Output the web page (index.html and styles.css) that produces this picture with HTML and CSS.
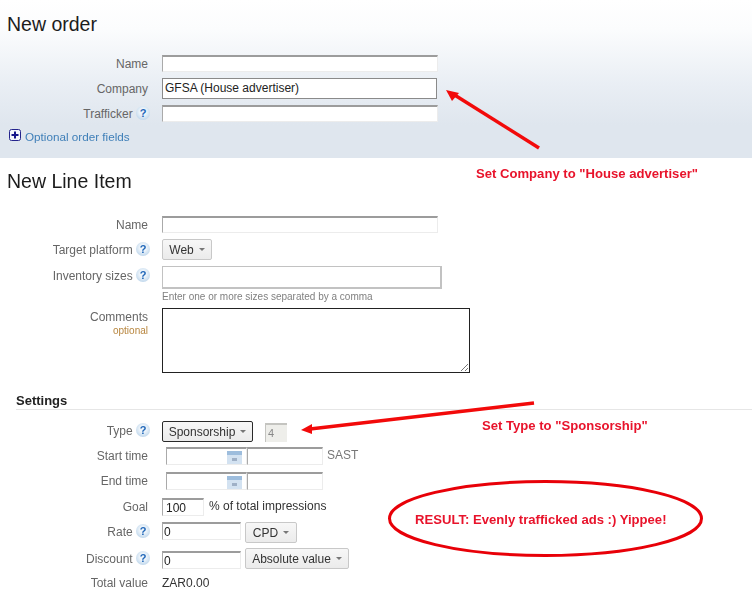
FILE: index.html
```html
<!DOCTYPE html>
<html lang="en">
<head>
<meta charset="utf-8">
<title>New order</title>
<link rel="stylesheet" href="styles.css">
</head>
<body>
<div class="page">
  <section class="panel">
    <h1 class="title">New order</h1>
    <div class="rows">
      <div class="row gap6"><span class="label">Name</span><span class="field w276 h17"></span></div>
      <div class="row gap6"><span class="label">Company</span><span class="field focus w275 h21">GFSA (House advertiser)</span></div>
      <div class="row"><span class="label">Trafficker <i class="help">?</i></span><span class="field w276 h17"></span></div>
    </div>
    <a class="more"><svg class="plus" width="12" height="12" viewBox="0 0 12 12"><rect x="0.5" y="0.5" width="11" height="11" rx="2" fill="#f4f6fb" stroke="#23238c"/><path d="M2.5 6h7M6 2.5v7" stroke="#14148a" stroke-width="2"/></svg>Optional order fields</a>
  </section>

  <section class="line">
    <h2 class="title short">New Line Item</h2>
    <div class="rows top12">
      <div class="row gap6"><span class="label">Name</span><span class="field w276 h17"></span></div>
      <div class="row gap6"><span class="label">Target platform <i class="help">?</i></span><span class="btn w50">Web <b class="caret"></b></span></div>
      <div class="row start"><span class="label pad2">Inventory sizes <i class="help">?</i></span><div><span class="field soft w280 h23"></span><div class="hint">Enter one or more sizes separated by a comma</div></div></div>
      <div class="row start gap6"><span class="label stack"><span>Comments</span><small class="opt">optional</small></span>
        <span class="area"><svg class="grip" width="9" height="9" viewBox="0 0 9 9"><path d="M1 8l7-7M5 8l3-3" stroke="#777" stroke-width="1"/></svg></span></div>
    </div>

    <h3 class="settings">Settings</h3>

    <div class="rows top11">
      <div class="row gap5"><span class="label lift">Type <i class="help">?</i></span><span class="btn dark w91">Sponsorship <b class="caret"></b></span><span class="count">4</span></div>
      <div class="row gap7"><span class="label">Start time</span>
        <span class="dates"><span class="field w81 h18 cal"><svg width="15" height="13" viewBox="0 0 15 13"><rect width="15" height="13" fill="#d3e2f1"/><rect width="15" height="4" fill="#9dbddd"/><rect x="5" y="7" width="5" height="3" fill="#9fb0c6"/></svg></span><span class="field w76 h18"></span></span><span class="after">SAST</span></div>
      <div class="row gap8"><span class="label">End time</span>
        <span class="dates"><span class="field w81 h18 cal"><svg width="15" height="13" viewBox="0 0 15 13"><rect width="15" height="13" fill="#d3e2f1"/><rect width="15" height="4" fill="#9dbddd"/><rect x="5" y="7" width="5" height="3" fill="#9fb0c6"/></svg></span><span class="field w76 h18"></span></span></div>
      <div class="row gap6"><span class="label">Goal</span><span class="field w42 h18">100</span><span class="after strong">% of total impressions</span></div>
      <div class="row gap5 start"><span class="label pad2">Rate <i class="help">?</i></span><span class="field w79 h18 tight">0</span><span class="btn w52 mleft4">CPD <b class="caret"></b></span></div>
      <div class="row gap7 start"><span class="label pad3">Discount <i class="help">?</i></span><span class="field w79 h18 tight drop3">0</span><span class="btn w104 mleft4">Absolute value <b class="caret"></b></span></div>
      <div class="row"><span class="label">Total value</span><span class="value">ZAR0.00</span></div>
    </div>
  </section>

  <svg class="marks" width="752" height="600" viewBox="0 0 752 600">
    <path d="M539 148L453 94" stroke="#f20a0a" stroke-width="3.5" fill="none"/>
    <path d="M446 90L459 93L452 101Z" fill="#f20a0a"/>
    <path d="M534 403L310 429" stroke="#f20a0a" stroke-width="3.5" fill="none"/>
    <path d="M301 430L312 424L312 434Z" fill="#f20a0a"/>
    <ellipse cx="545.5" cy="518.5" rx="156" ry="37" fill="none" stroke="#e80008" stroke-width="3"/>
  </svg>
  <div class="note n1">Set Company to "House advertiser"</div>
  <div class="note n2">Set Type to "Sponsorship"</div>
  <div class="note n3">RESULT: Evenly trafficked ads :) Yippee!</div>
</div>
</body>
</html>
```

FILE: styles.css
```css
* { box-sizing: border-box; }
html, body { margin: 0; padding: 0; background: #fff; }
body { font-family: "Liberation Sans", Arial, sans-serif; font-size: 12px; color: #222; }
.page { position: relative; width: 752px; height: 600px; overflow: hidden; filter: blur(0.3px); }

.panel { height: 158px; background: linear-gradient(#ffffff 0, #fbfcfd 30px, #e9eef4 85px, #dfe6ee 125px, #dfe6ee 158px); }
.title { margin: 0; height: 48px; padding-left: 7px; font-size: 19.5px; line-height: 48px; font-weight: 400; color: #1c1c1c; }
.short { height: 46px; line-height: 46px; }
.rows { padding-top: 7px; }
.top12 { padding-top: 12px; }
.top11 { padding-top: 11px; }

.row { display: flex; align-items: center; }
.start { align-items: flex-start; }
.gap5 { margin-bottom: 5px; }
.gap6 { margin-bottom: 6px; }
.gap7 { margin-bottom: 7px; }
.gap8 { margin-bottom: 8px; }

.label { flex: none; width: 148px; margin-right: 14px; text-align: right; color: #666; line-height: 14px; white-space: nowrap; }
.pad2 { padding-top: 2px; }
.pad3 { padding-top: 3px; }
.lift { margin-bottom: 2px; }
.stack { display: flex; flex-direction: column; align-items: flex-end; padding-top: 2px; }
.opt { margin-top: 1px; font-size: 10px; line-height: 12px; color: #b8863f; }

.help { display: inline-block; width: 14px; height: 14px; margin-right: -2px; vertical-align: 1px; border-radius: 50%; background: radial-gradient(circle at 50% 42%, #eef5fb 30%, #a9c8e4 100%); color: #1f66b8; font: bold 11px/14px "Liberation Sans", sans-serif; text-align: center; }

.field { display: block; flex: none; background: #fff; border-style: solid; border-width: 2px 1px 1px 1px; border-color: #9c9c9c #ececec #ececec #aaaaaa; color: #222; font-size: 12px; line-height: 16px; padding: 0 3px; }
.focus { border: 1px solid #8a8a8a; font-size: 12px; line-height: 19px; padding: 0 2px; }
.soft { border: 2px solid #c2c2c2; border-width: 1px 2px 2px 1px; }
.tight { padding: 0 1px; }
.drop3 { margin-top: 3px; }
.w42 { width: 42px; } .w76 { width: 76px; } .w79 { width: 79px; } .w81 { width: 81px; }
.w275 { width: 275px; } .w276 { width: 276px; } .w280 { width: 280px; }
.h17 { height: 17px; } .h18 { height: 18px; } .h21 { height: 21px; } .h23 { height: 23px; }

.btn { display: flex; flex: none; align-items: center; justify-content: center; gap: 5px; height: 21px; background: linear-gradient(#f7f7f7, #ebebeb); border: 1px solid #c8c8c8; border-radius: 2px; color: #333; font-size: 12px; }
.dark { border-color: #2a2a2a; }
.w50 { width: 50px; } .w52 { width: 52px; } .w91 { width: 91px; } .w104 { width: 104px; }
.mleft4 { margin-left: 4px; }
.caret { width: 0; height: 0; border-style: solid; border-width: 3px 3.5px 0 3.5px; border-color: #777 transparent transparent transparent; }

.hint { margin-top: 2px; height: 17px; font-size: 10px; line-height: 12px; color: #808080; white-space: nowrap; }
.area { display: block; position: relative; width: 308px; height: 65px; background: #fff; border: 1px solid #222; }
.grip { position: absolute; right: 0; bottom: 0; }

.settings { margin: 19px 0 0 16px; height: 18px; border-bottom: 1px solid #e6e6e6; font-size: 13px; line-height: 18px; font-weight: 700; color: #222; }

.count { width: 22px; height: 19px; margin: 2px 0 0 12px; background: #eeeeea; border: 1px solid #c4c4c0; border-width: 2px 0 0 1px; color: #888; font-size: 11px; line-height: 17px; padding-left: 2px; }
.dates { display: flex; margin-left: 4px; }
.cal { display: flex; justify-content: flex-end; align-items: center; padding: 2px 4px 0 0; }
.cal svg { display: block; }
.after { margin-left: 4px; margin-bottom: 2px; color: #777; line-height: 14px; }
.strong { margin-left: 5px; color: #333; font-size: 12px; }
.value { color: #333; line-height: 14px; }

.more { display: flex; align-items: center; height: 16px; margin-top: 6px; padding-left: 9px; color: #3f7fb8; font-size: 11.7px; }
.plus { margin-right: 4px; margin-top: -3px; }

.marks { position: absolute; left: 0; top: 0; pointer-events: none; }
.note { position: absolute; color: #e8132b; font-size: 13.1px; font-weight: 700; line-height: 14px; white-space: nowrap; }
.n1 { left: 476px; top: 167px; }
.n2 { left: 482px; top: 419px; }
.n3 { left: 415px; top: 513px; }
```
